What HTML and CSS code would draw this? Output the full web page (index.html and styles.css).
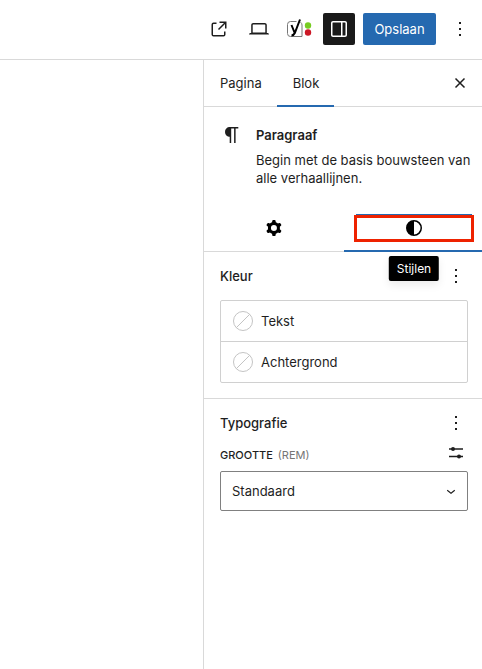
FILE: index.html
```
<!DOCTYPE html>
<html lang="nl">

<head>
    <meta charset="UTF-8">
    <meta name="viewport" content="width=device-width, initial-scale=1">
    <title>Pagina bewerken</title>
    <link rel="stylesheet" href="styles.css">
</head>

<body>
    <div class="editor">
        <header class="header">
            <button type="button" class="icon-button" aria-label="Pagina bekijken">
                <svg width="24" height="24" viewBox="0 0 24 24"><path d="M19.5 4.5h-7V6h4.44l-5.97 5.97 1.06 1.06L18 7.06v4.44h1.5v-7Zm-13 1a2 2 0 0 0-2 2v10a2 2 0 0 0 2 2h10a2 2 0 0 0 2-2v-3H17v3a.5.5 0 0 1-.5.5h-10a.5.5 0 0 1-.5-.5v-10a.5.5 0 0 1 .5-.5h3V5.5h-3Z"/></svg>
            </button>
            <button type="button" class="icon-button" aria-label="Weergave">
                <svg width="24" height="24" viewBox="0 0 24 24"><path d="M20.5 16h-.7V8c0-1.1-.9-2-2-2H6.2c-1.1 0-2 .9-2 2v8h-.7c-.8 0-1.5.7-1.5 1.5h20c0-.8-.7-1.5-1.5-1.5zM5.7 8c0-.3.2-.5.5-.5h11.6c.3 0 .5.2.5.5v7.6H5.7V8z"/></svg>
            </button>
            <button type="button" class="icon-button" aria-label="Yoast SEO">
                <svg width="26" height="20" viewBox="0 0 26 20">
                    <path d="M10.500 2.500H4.500a3 3 0 0 0-3 3v9a3 3 0 0 0 3 3h11.500V6a3.500 3.500 0 0 0-1.500-2.800" fill="none" stroke="#777" stroke-width="1"/>
                    <path d="M5.500 6l3 7.500M14 .5L8.800 14Q7.800 16.300 5.500 16.500" fill="none" stroke="#000" stroke-width="2"/>
                    <circle cx="22" cy="6.500" r="3.200" fill="#77cc22"/>
                    <circle cx="22" cy="13.500" r="3.200" fill="#cc1826"/>
                </svg>
            </button>
            <button type="button" class="icon-button active" aria-label="Instellingen">
                <svg width="24" height="24" viewBox="0 0 24 24"><path d="M18 4H6c-1.100 0-2 .9-2 2v12c0 1.100.9 2 2 2h12c1.100 0 2-.9 2-2V6c0-1.100-.9-2-2-2zm-4 14.500H6c-.3 0-.5-.2-.5-.5V6c0-.3.2-.5.5-.5h8v13zm4.500-.5c0 .3-.2.5-.5.5h-2.500v-13H18c.3 0 .5.2.5.5v12z"/></svg>
            </button>
            <button type="button" class="save-button">Opslaan</button>
            <button type="button" class="icon-button" aria-label="Opties">
                <svg width="24" height="24" viewBox="0 0 24 24"><path d="M13 19h-2v-2h2v2zm0-6h-2v-2h2v2zm0-6h-2V5h2v2z"/></svg>
            </button>
        </header>

        <div class="body">
            <main class="canvas"></main>

            <aside class="sidebar">
                <div class="tabs">
                    <button type="button" class="tab">Pagina</button>
                    <button type="button" class="tab selected">Blok</button>
                    <button type="button" class="icon-button close" aria-label="Sluiten">
                        <svg width="24" height="24" viewBox="0 0 24 24"><path d="M7.500 7.500l9 9M16.500 7.500l-9 9" fill="none" stroke="currentColor" stroke-width="1.500"/></svg>
                    </button>
                </div>

                <section class="block-card">
                    <svg width="24" height="24" viewBox="0 0 24 24"><path d="M18.300 4H9.900v-.1l-.9.2c-2.300.4-4 2.400-4 4.800s1.700 4.400 4 4.800l.7.1V20h1.500V5.500h2.900V20h1.500V5.500h2.700V4z"/></svg>
                    <div>
                        <h2 class="block-title">Paragraaf</h2>
                        <p class="block-text">Begin met de basis bouwsteen van alle verhaallijnen.</p>
                    </div>
                </section>

                <div class="inspector-tabs">
                    <button type="button" class="inspector-tab" aria-label="Instellingen">
                        <svg width="24" height="24" viewBox="0 0 24 24">
                            <path fill-rule="evenodd" d="M10.289 4.836A1 1 0 0111.275 4h1.306a1 1 0 01.987.836l.244 1.466c.787.26 1.503.679 2.108 1.218l1.393-.522a1 1 0 011.216.437l.653 1.130a1 1 0 01-.23 1.273l-1.148.944a6.025 6.025 0 010 2.435l1.149.946a1 1 0 01.23 1.272l-.653 1.130a1 1 0 01-1.216.437l-1.394-.522c-.605.54-1.320.958-2.108 1.218l-.244 1.466a1 1 0 01-.987.836h-1.306a1 1 0 01-.986-.836l-.244-1.466a5.995 5.995 0 01-2.108-1.218l-1.394.522a1 1 0 01-1.217-.436l-.653-1.131a1 1 0 01.23-1.272l1.149-.946a6.026 6.026 0 010-2.435l-1.148-.944a1 1 0 01-.23-1.272l.653-1.131a1 1 0 011.217-.437l1.393.522a5.994 5.994 0 012.108-1.218l.244-1.466zM14.929 12a3 3 0 11-6 0 3 3 0 016 0z"/>
                        </svg>
                    </button>
                    <button type="button" class="inspector-tab selected" aria-label="Stijlen">
                        <svg width="24" height="24" viewBox="0 0 24 24"><path fill-rule="evenodd" d="M12 4a8 8 0 1 0 0 16a8 8 0 1 0 0-16zM12 5.500a6.500 6.500 0 0 1 0 13z"/></svg>
                        <span class="highlight"></span>
                        <span class="tooltip">Stijlen</span>
                    </button>
                </div>

                <section class="panel">
                    <div class="panel-header">
                        <h2 class="panel-title">Kleur</h2>
                        <button type="button" class="small-button" aria-label="Kleur opties">
                            <svg width="24" height="24" viewBox="0 0 24 24"><path d="M13 19h-2v-2h2v2zm0-6h-2v-2h2v2zm0-6h-2V5h2v2z"/></svg>
                        </button>
                    </div>
                    <div class="color-list">
                        <button type="button" class="color-item">
                            <svg width="20" height="20" viewBox="0 0 20 20"><g fill="none" stroke="#c4c4c4"><circle cx="10" cy="10" r="9.500"/><path d="M3.300 16.700L16.700 3.300"/></g></svg>
                            Tekst
                        </button>
                        <button type="button" class="color-item">
                            <svg width="20" height="20" viewBox="0 0 20 20"><g fill="none" stroke="#c4c4c4"><circle cx="10" cy="10" r="9.500"/><path d="M3.300 16.700L16.700 3.300"/></g></svg>
                            Achtergrond
                        </button>
                    </div>
                </section>

                <section class="panel">
                    <div class="panel-header compact">
                        <h2 class="panel-title">Typografie</h2>
                        <button type="button" class="small-button" aria-label="Typografie opties">
                            <svg width="24" height="24" viewBox="0 0 24 24"><path d="M13 19h-2v-2h2v2zm0-6h-2v-2h2v2zm0-6h-2V5h2v2z"/></svg>
                        </button>
                    </div>
                    <div class="size-header">
                        <label for="size" class="size-label">Grootte <span class="unit">(rem)</span></label>
                        <button type="button" class="small-button" aria-label="Aangepaste grootte instellen">
                            <svg width="24" height="24" viewBox="0 0 24 24"><path d="M5 7.300h14v1.500H5zM5 14.800h14v1.500H5z"/><circle cx="9" cy="8" r="2"/><circle cx="15" cy="15.500" r="2"/></svg>
                        </button>
                    </div>
                    <div class="select-wrap">
                        <select id="size" class="select">
                            <option>Standaard</option>
                            <option>Klein</option>
                            <option>Normaal</option>
                            <option>Groot</option>
                        </select>
                        <svg class="chevron" width="18" height="18" viewBox="0 0 24 24"><path d="M17.500 11.600L12 16l-5.500-4.400.9-1.200L12 14l4.500-3.600 1 1.200z"/></svg>
                    </div>
                </section>
            </aside>
        </div>
    </div>
</body>

</html>
```
FILE: styles.css
```
* {
    box-sizing: border-box;
}

body {
    margin: 0;
    background: #fff;
    color: #1e1e1e;
    font-family: Inter, "Liberation Sans", sans-serif;
    font-size: 13px;
    line-height: 18px;
}

button,
select {
    font: inherit;
    color: inherit;
    margin: 0;
    padding: 0;
    border: none;
    background: none;
    cursor: pointer;
}

h2,
p {
    margin: 0;
}

svg {
    display: block;
    flex: none;
    fill: currentColor;
}

.editor {
    display: flex;
    flex-direction: column;
    min-height: 100vh;
}

.header {
    display: flex;
    align-items: center;
    justify-content: flex-end;
    gap: 8px;
    padding: 13px 6px 14px;
    border-bottom: 1px solid #d9d9d9;
}

.icon-button {
    display: flex;
    align-items: center;
    justify-content: center;
    width: 32px;
    height: 32px;
}

.icon-button.active {
    background: #1a1a1a;
    color: #fff;
    border-radius: 2px;
}

.save-button {
    min-width: 73px;
    height: 32px;
    padding: 0 11px;
    border-radius: 2px;
    background: #2569b0;
    color: #fff;
}

.body {
    display: flex;
    flex: 1;
}

.canvas {
    flex: 1;
}

.sidebar {
    width: 279px;
    border-left: 1px solid #d9d9d9;
    overflow: hidden;
}

/* Pagina / Blok */
.tabs {
    display: flex;
    align-items: center;
    height: 47px;
    padding-right: 6px;
    border-bottom: 1px solid #d9d9d9;
}

.tab {
    height: 47px;
    padding: 0 15px 0 16px;
}

.tab.selected,
.inspector-tab.selected {
    box-shadow: inset 0 -2px #2569b0;
}

.close {
    margin-left: auto;
}

.block-card {
    display: flex;
    gap: 12px;
    padding: 16px 8px 17px 16px;
}

.block-title {
    margin-bottom: 4px;
    font-size: 13px;
    font-weight: 600;
    line-height: 24px;
}

/* Instellingen / Stijlen */
.inspector-tabs {
    display: flex;
    height: 48px;
    border-bottom: 1px solid #d9d9d9;
}

.inspector-tab {
    position: relative;
    display: flex;
    flex: none;
    align-items: center;
    justify-content: center;
    width: 140px;
    height: 48px;
    color: #000;
}

.highlight {
    position: absolute;
    top: 11px;
    left: 10px;
    right: 10px;
    height: 27px;
    border: 3px solid #ee2200;
}

.highlight::before {
    content: "";
    position: absolute;
    top: -4px;
    left: -1px;
    right: -1px;
    height: 1px;
    background: #2569b0;
}

.tooltip {
    position: absolute;
    top: 52px;
    left: 50%;
    transform: translateX(-50%);
    padding: 4px 8px;
    border-radius: 2px;
    background: #000;
    color: #fff;
    font-size: 12px;
    line-height: 17px;
    box-shadow: 0 4px 8px rgba(0, 0, 0, 0.08);
}

.panel {
    padding: 12px 14px 15px 16px;
}

.panel + .panel {
    border-top: 1px solid #d9d9d9;
}

.panel-header,
.size-header {
    display: flex;
    align-items: center;
    justify-content: space-between;
}

.panel-header {
    margin-bottom: 12px;
}

.panel-header.compact,
.size-header {
    margin-bottom: 6px;
}

.panel-title {
    font-size: 13px;
    font-weight: 500;
}

.small-button {
    width: 24px;
    height: 24px;
}

.color-list {
    border: 1px solid #d0d0d0;
    border-radius: 2px;
}

.color-item {
    display: flex;
    align-items: center;
    gap: 8px;
    width: 100%;
    height: 40px;
    padding: 0 12px;
}

.color-item + .color-item {
    height: 41px;
    border-top: 1px solid #d0d0d0;
}

.size-label {
    padding-top: 4px;
    font-size: 11px;
    font-weight: 500;
    text-transform: uppercase;
}

.unit {
    margin-left: 2px;
    color: #757575;
    font-weight: 400;
}

.select-wrap {
    position: relative;
}

.select {
    display: block;
    width: 100%;
    height: 40px;
    padding: 0 32px 0 11px;
    border: 1px solid #808080;
    border-radius: 2px;
    background: #fff;
    appearance: none;
}

.chevron {
    position: absolute;
    top: 11px;
    right: 8px;
    pointer-events: none;
}
```
